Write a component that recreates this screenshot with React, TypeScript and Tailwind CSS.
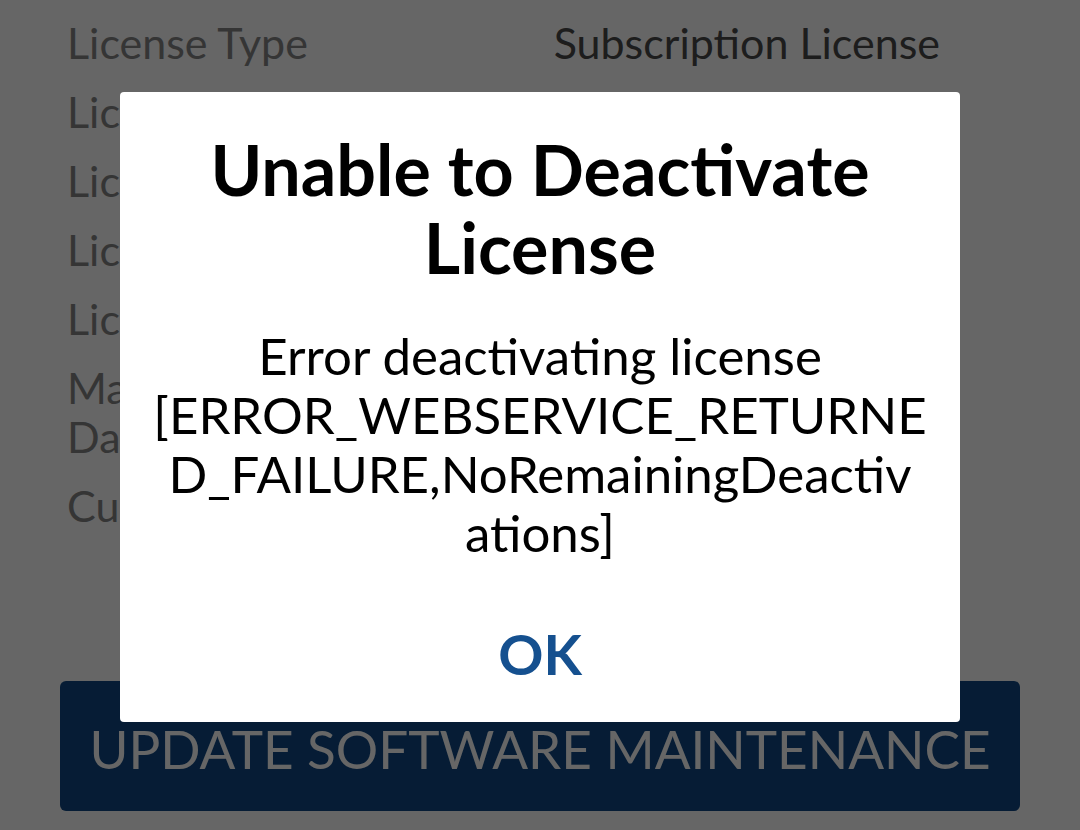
import React from 'react'

const rows: { label: React.ReactNode; value: string }[] = [
  { label: 'License Type', value: 'Subscription License' },
  { label: 'License Key', value: 'XXXX-XXXX-XXXX' },
  { label: 'License Status', value: 'Active' },
  { label: 'License Expiry', value: '12/31/2025' },
  { label: 'Licensed To', value: 'Owner' },
  { label: <>Maintenance<br />Date</>, value: '12/31/2025' },
  { label: 'Customer ID', value: '000000' },
]

const msgLines = [
  'Error deactivating license',
  '[ERROR_WEBSERVICE_RETURNE',
  'D_FAILURE,NoRemainingDeactiv',
  'ations]',
]

export default function App() {
  return (
    <div className="relative w-[1080px] h-[830px] overflow-hidden bg-white" style={{ fontFamily: 'Lato, "Noto Sans", sans-serif' }}>
      {/* page behind the dialog */}
      <div className="pt-[8px] pl-[67px] pr-[140px]">
        {rows.map((r, i) => (
          <div key={i} className="grid grid-cols-[400px_1fr] py-[10px] text-[43px] leading-[49px]">
            <span className="text-[#868686] whitespace-nowrap">{r.label}</span>
            <span className="text-right text-[#4a4a4a] whitespace-nowrap">{r.value}</span>
          </div>
        ))}
      </div>
      <div className="mx-[60px] mt-[141px] h-[130px] rounded-[6px] bg-[#0f4884] flex items-center justify-center">
        <span className="text-white text-[53px] leading-none pt-[4px]">UPDATE SOFTWARE MAINTENANCE</span>
      </div>

      {/* overlay */}
      <div className="absolute inset-0 bg-black/60" />

      {/* dialog */}
      <div className="absolute left-[120px] top-[92px] w-[840px] h-[630px] bg-white rounded-[4px] flex flex-col items-center pt-[38px]">
        <h1 className="text-black font-bold text-[70px] leading-[78px] text-center">
          Unable to Deactivate<br />License
        </h1>
        <p className="mt-[40px] text-black text-[51px] leading-[59px] text-center">
          {msgLines.map((l) => (
            <span key={l} className="block whitespace-nowrap">{l}</span>
          ))}
        </p>
        <button className="mt-[56px] text-[#15508f] font-bold text-[56px] leading-none px-6 py-2">OK</button>
      </div>
    </div>
  )
}
